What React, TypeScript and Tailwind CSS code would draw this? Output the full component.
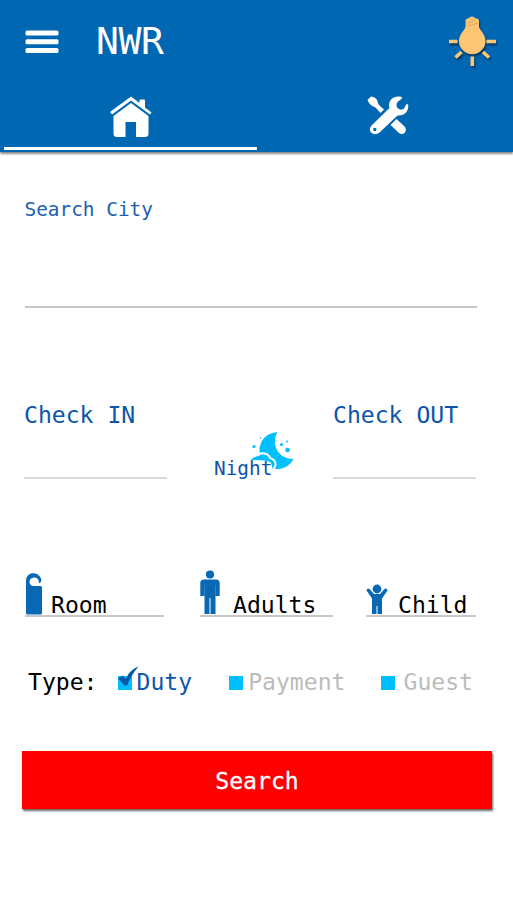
import { useState } from "react";

const MenuIcon = () => (
  <svg className="ml-[25px] h-[24px] w-[34px]" viewBox="0 0 34 24" fill="#fff">
    <rect x="0.5" y="0.5" width="33" height="5" rx="1.5" />
    <rect x="0.5" y="9.3" width="33" height="5" rx="1.5" />
    <rect x="0.5" y="18" width="33" height="5" rx="1.5" />
  </svg>
);

const BulbIcon = () => (
  <svg
    className="h-[54px] w-[52px] drop-shadow-[1px_2px_1px_rgba(0,0,0,0.5)]"
    viewBox="0 0 52 54"
    fill="#fdc675"
    stroke="#fdc675"
  >
    <path
      stroke="none"
      d="M19.500 6 Q19.500 3.500 23 3.200 Q23.500 1.500 26 1.500 Q28.500 1.500 29 3.200 Q33 3.500 33 6 V11.500 C34 16 39.500 19 39.500 26 A13.200 13.200 0 0 1 13 26 C13 19 18.500 16 19.500 11.500 Z"
    />
    <path
      d="M3 26.500 H11.500 M40.500 26.500 H50 M15.500 37 L9.500 42.500 M37 37 L43 42.500 M26.300 41.500 V51"
      strokeWidth="3.6"
    />
    <path d="M20.500 8 L30 5.500 M22 11 L32 8" stroke="#d9a25c" strokeWidth="0.9" />
  </svg>
);

const HomeIcon = () => (
  <svg className="h-[42px] w-[44px]" viewBox="0 0 44 42" fill="#fff">
    <path d="M22 0.500 L30.500 7 V4.500 Q30.500 3.500 31.500 3.500 H35 Q36 3.500 36 4.500 V11.500 L42.500 16.500 L41 18.500 L22 4.500 L3 18.500 L1 16 Z" />
    <path d="M22 7 L39.500 20 V37.500 Q39.500 41 36 41 H27 V26 H16.500 V41 H8 Q4.500 41 4.500 37.500 V20 Z" />
  </svg>
);

const ToolsIcon = () => (
  <svg className="h-[40px] w-[42px]" viewBox="0 0 42 40" fill="#fff">
    <path d="M0.500 4 L4 0.500 Q9 1 10.500 5 Q10.500 7 12 9 L17 13.500 L13.500 17 L8.500 11.500 Q2.500 9.500 0.500 4 Z M29.500 23 L38 31 Q40 34 37.500 37 Q35 39 32 37 L23.500 29 Z" />
    <path
      fillRule="evenodd"
      d="M34.500 0.800 Q28 -0.500 24 3.500 Q21 7 22.500 12 L4.500 29.500 Q1.500 33 4 36.500 Q8 40 12.500 36.500 L30.500 19.500 Q36 20 39.500 16 Q42 12 41 8.500 L39.500 8 L37 12.500 Q34 15 30.500 12 Q28.500 9 30.500 6 L35 2.500 Z M9.500 33.500 A1.700 1.700 0 1 1 6.100 33.500 A1.700 1.700 0 1 1 9.500 33.500 Z"
    />
  </svg>
);

const MoonIcon = () => (
  <svg
    className="absolute -top-[26px] left-[37px] h-[42px] w-[44px]"
    viewBox="0 0 44 42"
    fill="#00bfff"
  >
    <path d="M26.500 1 C15 2 8 10 8.500 21 L24 38 C32 38.500 39 35 42.500 28 C27 28 19.500 13 26.500 1 Z" />
    <path
      d="M0 29 Q2 25 6.500 23.500 Q9 20.500 14 21.500 Q18.500 22.500 20 26.500 Q26 28.500 25.500 34 Q25 37 22.500 39 L2 40 Z"
      fill="#fff"
    />
    <path d="M0 29 Q3 25.500 7.500 25 Q10 22.500 13.500 23.500 Q17.500 24.500 18.500 28 Q24 29.500 23.500 34 Q23 36.500 21 38 Q22 33 18 30.500 Q15 29 0 29 Z" />
    <circle cx="3" cy="15.500" r="1.600" />
    <circle cx="9.500" cy="7" r="0.800" />
    <circle cx="30.500" cy="13.500" r="1.500" />
    <circle cx="36" cy="10.500" r="1" />
    <circle cx="36.500" cy="19" r="2.300" />
  </svg>
);

const RoomIcon = () => (
  <svg className="h-[42px] w-[18px]" viewBox="0 0 18 42" fill="#0868b4">
    <path d="M1 8 C1 -1.500 13 -2 16 5.500 Q17 10 14 10 Q14 4.500 9 4.500 Q4.500 5 4.500 9 Q5 13 8.500 13 H15.500 Q17 13 17 14.500 V40 Q17 41.500 15.500 41.500 H2.500 Q1 41.500 1 40 Z" />
  </svg>
);

const AdultIcon = () => (
  <svg className="h-[45px] w-[20px]" viewBox="0 0 20 45" fill="#0868b4">
    <circle cx="10" cy="4.500" r="4.100" />
    <path d="M4 9.500 H16 Q19.700 9.500 19.700 13 V26 H15.500 V44 H10.500 V28 H9.500 V44 H4.500 V26 H0.300 V13 Q0.300 9.500 4 9.500 Z" />
    <path d="M4.500 15 V26 M15.500 15 V26" stroke="#73a9d4" strokeWidth="0.400" />
  </svg>
);

const ChildIcon = () => (
  <svg className="h-[31px] w-[22px]" viewBox="0 0 22 31" fill="#0868b4">
    <circle cx="11" cy="5" r="4.400" />
    <path d="M0.500 6.500 Q1 3.500 3.500 5 L8 10 H14 L18.500 5 Q21 3.500 21.500 6.500 L16 14.500 V30 H11.500 V22 H10.500 V30 H6 V14.500 Z" />
  </svg>
);

const CheckMark = () => (
  <svg className="absolute -top-[10px] left-0 h-[22px] w-[21px]" viewBox="0 0 21 22">
    <path
      d="M0 12.500 L4.500 9.500 L8 13 C10.500 7 14 3 20.500 0.500 C15.500 6.500 11.500 13 9 19.500 H6.500 Z"
      fill="#0758a8"
    />
  </svg>
);

const types = [
  { name: "Duty", box: "ml-[20px]", label: "ml-[5px]" },
  { name: "Payment", box: "ml-[37px]", label: "ml-[5px]" },
  { name: "Guest", box: "ml-[36px]", label: "ml-[8px]" },
];

export default function App() {
  const [type, setType] = useState("Duty");

  return (
    <div className="flex h-[900px] w-[513px] flex-col bg-white font-['DejaVu_Sans_Mono',monospace] text-[23.100px] leading-7 text-black">
      <header className="flex h-[152px] flex-col bg-[#0067b3] pb-[2px] shadow-[0_2px_2px_#8f8a88]">
        <div className="flex h-[83px] items-center">
          <MenuIcon />
          <h1 className="ml-[37px] text-[38px] leading-[83px] tracking-[-0.400px] text-white">NWR</h1>
          <button className="ml-auto mr-[15px]">
            <BulbIcon />
          </button>
        </div>
        <nav className="grid flex-1 grid-cols-2">
          <button className="ml-1 flex justify-center border-b-[3px] border-white pt-[13px] pl-[2px]">
            <HomeIcon />
          </button>
          <button className="flex justify-center pt-[13px] pl-[6px]">
            <ToolsIcon />
          </button>
        </nav>
      </header>

      <main className="flex flex-col">
        <label className="mt-[46px] ml-[24.500px] text-[19.400px] leading-6 text-[#1d5fae]">Search City</label>
        <div className="mt-[84px] ml-[25px] h-[2px] w-[452px] bg-[#c8c8c8]" />

        <section className="mt-[93px] flex h-[78px] pl-[24px] text-[#0d55a8]">
          <div className="w-[143px] border-b-2 border-[#dadada]">Check IN</div>
          <div className="relative mt-[56px] ml-[47px] h-6 w-[60px] text-[19.400px] leading-6">
            <MoonIcon />
            <span className="relative">Night</span>
          </div>
          <div className="ml-[59px] w-[143px] border-b-2 border-[#dadada]">Check OUT</div>
        </section>

        <section className="mt-[89px] flex h-[49px] items-end pl-[25px]">
          <div className="flex w-[139px] items-end border-b-2 border-[#c8c8c8]">
            <RoomIcon />
            <span className="-mb-[4px] ml-[8px]">Room</span>
          </div>
          <div className="ml-[36px] flex w-[133px] items-end border-b-2 border-[#c8c8c8]">
            <AdultIcon />
            <span className="-mb-[4px] ml-[13px]">Adults</span>
          </div>
          <div className="ml-[33px] flex w-[110px] items-end border-b-2 border-[#c8c8c8]">
            <ChildIcon />
            <span className="-mb-[4px] ml-[10px]">Child</span>
          </div>
        </section>

        <section className="mt-[51px] flex h-7 items-center pl-[28px]">
          <span>Type:</span>
          {types.map((t) => (
            <button key={t.name} className="flex items-center" onClick={() => setType(t.name)}>
              <span className={`relative mt-[2px] size-[14px] bg-[#00bfff] ${t.box}`}>
                {type === t.name && <CheckMark />}
              </span>
              <span className={`${t.label} ${type === t.name ? "text-[#0d55a8]" : "text-[#bcbcbc]"}`}>
                {t.name}
              </span>
            </button>
          ))}
        </section>

        <button className="mt-[55px] ml-[22px] h-[58px] w-[470px] bg-[#fe0000] pt-[2px] text-white shadow-[1px_2px_2px_rgba(0,0,0,0.6)] [-webkit-text-stroke:0.300px_white]">
          Search
        </button>
      </main>
    </div>
  );
}
